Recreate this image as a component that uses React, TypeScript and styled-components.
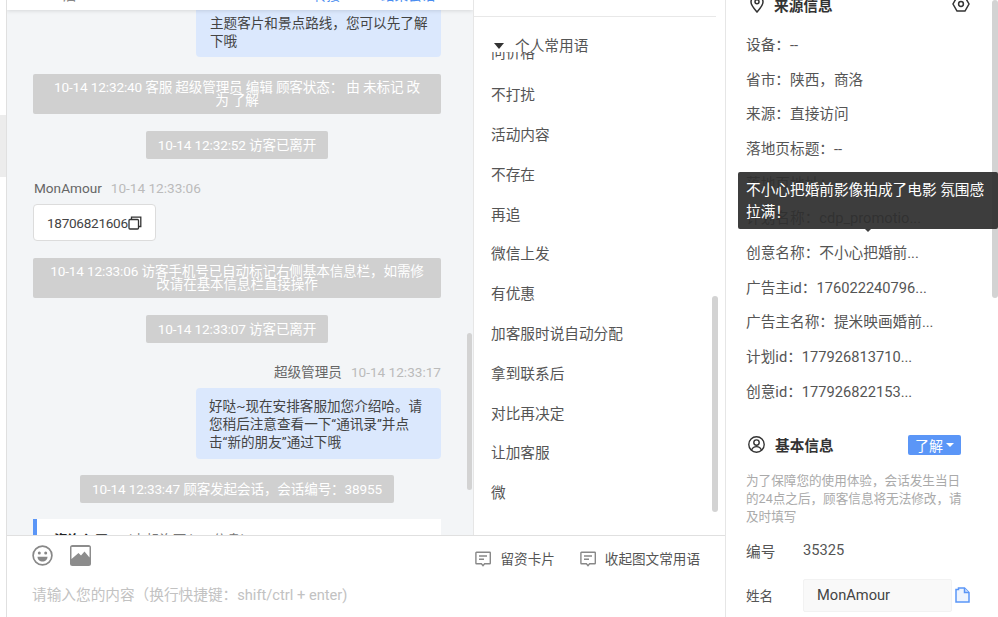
import React from 'react';
import styled, { createGlobalStyle } from 'styled-components';

const GlobalStyle = createGlobalStyle`
  html, body { margin: 0; padding: 0; height: 100%; overflow: hidden; background: #fff; }
  body { font-family: Roboto, "Noto Sans CJK SC", sans-serif; color: #333; font-variant-ligatures: none; }
  #root { height: 100%; }
`;

const Page = styled.div`
  position: relative;
  display: flex;
  width: 998px;
  height: 617px;
  overflow: hidden;
`;

const Gutter = styled.div`
  width: 6px;
  flex: none;
  padding-top: 115px;
  box-sizing: border-box;
`;

const GutterTab = styled.div`
  height: 62px;
  background: #ececec;
`;

const Workspace = styled.div`
  width: 720px;
  flex: none;
  display: flex;
  flex-direction: column;
  border-left: 1px solid #e0e0e0;
  border-right: 1px solid #e6e6e6;
  box-sizing: border-box;
`;

const Upper = styled.div`
  flex: 1;
  min-height: 0;
  display: flex;
`;

const ChatColumn = styled.div`
  position: relative;
  width: 466px;
  flex: none;
  display: flex;
  flex-direction: column;
  background: #f3f5f7;
  border-right: 1px solid #e6e6e6;
  overflow: hidden;
`;

const TopStrip = styled.div`
  height: 10px;
  flex: none;
  display: flex;
  align-items: flex-end;
  background: #fff;
  box-shadow: 0 1px 4px rgba(0, 0, 0, 0.12);
  font-size: 13.6px;
  line-height: 18px;
  overflow: hidden;
  position: relative;
  z-index: 1;
  padding-left: 56px;
`;

const StripCell = styled.span<{ $width: number; $blue?: boolean }>`
  width: ${p => p.$width}px;
  flex: none;
  white-space: nowrap;
  margin-bottom: 6px;
  color: ${p => (p.$blue ? '#4a8df0' : '#888')};
`;

const Messages = styled.div`
  flex: 1;
  display: flex;
  flex-direction: column;
  align-items: flex-start;
  padding: 0 32px 0 26px;
  overflow: hidden;
`;

const Bubble = styled.div<{ $top: number; $cut?: boolean }>`
  align-self: flex-end;
  width: 245px;
  flex: none;
  box-sizing: border-box;
  margin-top: ${p => p.$top}px;
  padding: ${p => (p.$cut ? '4px 10px 7px 14px' : '9px 10px 8px 13px')};
  background: #dbe8fd;
  border-radius: ${p => (p.$cut ? '0 0 4px 4px' : '4px')};
  font-size: 13.6px;
  line-height: 18px;
  color: #444;
  white-space: nowrap;
`;

const SystemNote = styled.div<{ $top: number; $wide?: boolean }>`
  align-self: center;
  flex: none;
  box-sizing: border-box;
  width: ${p => (p.$wide ? '408px' : 'auto')};
  margin-top: ${p => p.$top}px;
  padding: ${p => (p.$wide ? '7px 15px' : '7px 12px')};
  min-height: 28px;
  background: #d0d0d0;
  border-radius: 2px;
  color: #fff;
  font-size: 13.6px;
  letter-spacing: -0.15px;
  line-height: ${p => (p.$wide ? '13px' : '14px')};
  text-align: center;
`;

const Meta = styled.div<{ $top: number; $right?: boolean }>`
  align-self: ${p => (p.$right ? 'flex-end' : 'flex-start')};
  flex: none;
  display: flex;
  gap: 9px;
  margin-top: ${p => p.$top}px;
  margin-left: ${p => (p.$right ? 0 : 1)}px;
  font-size: 13.6px;
  line-height: 18px;
  color: #666;
`;

const MetaTime = styled.span`
  color: #bbb;
`;

const PhoneCard = styled.div`
  flex: none;
  display: flex;
  align-items: center;
  height: 37px;
  width: 123px;
  margin-top: 7px;
  box-sizing: border-box;
  padding-left: 13px;
  background: #fff;
  border: 1px solid #dcdcdc;
  border-radius: 4px;
  font-size: 13.6px;
  letter-spacing: -0.3px;
  color: #444;

  svg { flex: none; }
`;

const InfoCard = styled.div`
  flex: none;
  align-self: stretch;
  height: 40px;
  margin-top: 16px;
  box-sizing: border-box;
  padding: 12px 0 0 17px;
  background: #fff;
  border-left: 4px solid #5b96f7;
  font-size: 13.6px;
  line-height: 18px;
`;

const InfoTitle = styled.b`
  color: #222;
  margin-right: 10px;
`;

const InfoHint = styled.span`
  color: #777;
`;

const Thumb = styled.div<{ $right: number; $top: number; $height: number; $width?: number }>`
  position: absolute;
  right: ${p => p.$right}px;
  top: ${p => p.$top}px;
  width: ${p => p.$width ?? 5}px;
  height: ${p => p.$height}px;
  background: #d3d3d3;
  border-radius: 3px;
`;

const PhrasePanel = styled.div`
  position: relative;
  flex: 1;
  min-width: 0;
  display: flex;
  flex-direction: column;
  background: #fff;
`;

const PanelRule = styled.div`
  height: 17px;
  box-sizing: border-box;
  flex: none;
  margin-right: 9px;
  border-bottom: 1px solid #e8e8e8;
`;

const GroupHead = styled.div`
  flex: none;
  height: 35px;
  box-sizing: border-box;
  display: flex;
  align-items: center;
  gap: 11px;
  padding: 19px 0 0 20px;
  font-size: 14.67px;
  color: #555;
  position: relative;
  z-index: 1;
  background: #fff;
`;

const Caret = styled.i`
  width: 0;
  height: 0;
  margin-top: 4px;
  border-left: 5.5px solid transparent;
  border-right: 5.5px solid transparent;
  border-top: 6px solid #333;
`;

const PhraseList = styled.div`
  flex: 1;
  min-height: 0;
  margin-top: -20px;
  padding-left: 17px;
  overflow: hidden;
`;

const Phrase = styled.div`
  height: 39.8px;
  display: flex;
  align-items: center;
  font-size: 14.67px;
  color: #555;

  &:first-child { margin-bottom: 2px; }
`;

const Composer = styled.div`
  height: 82px;
  flex: none;
  box-sizing: border-box;
  border-top: 1px solid #e0e0e0;
  background: #fff;
  display: flex;
  flex-direction: column;
  padding: 9px 25px 0 25px;
`;

const ComposerBar = styled.div`
  display: flex;
  align-items: flex-start;
`;

const ComposerIcons = styled.div`
  display: flex;
  gap: 17px;
  flex: 1;
`;

const ToolButton = styled.div`
  display: flex;
  align-items: center;
  gap: 9px;
  margin-top: 5px;
  margin-left: 25px;
  font-size: 13.6px;
  line-height: 18px;
  color: #555;
`;

const Placeholder = styled.div`
  margin-top: 17px;
  font-size: 14.67px;
  line-height: 20px;
  color: #c2c2c2;
`;

const Sidebar = styled.div`
  flex: 1;
  min-width: 0;
  padding: 0 0 0 20px;
  box-sizing: border-box;
  display: flex;
  flex-direction: column;
  overflow: hidden;
`;

const SectionHead = styled.div<{ $top: number; $indent: number }>`
  flex: none;
  display: flex;
  align-items: center;
  height: 20px;
  margin-top: ${p => p.$top}px;
  padding-left: ${p => p.$indent}px;
  font-size: 14.67px;
  font-weight: 700;
  color: #333;
`;

const SectionTitle = styled.span<{ $width: number }>`
  margin-left: 10px;
  width: ${p => p.$width}px;
  flex: none;
`;

const SourceRows = styled.div`
  flex: none;
  margin-top: 12px;
`;

const SourceRow = styled.div`
  height: 34.7px;
  display: flex;
  align-items: center;
  font-size: 14.67px;
  color: #555;
  white-space: nowrap;
`;

const StatusButton = styled.div`
  display: flex;
  align-items: center;
  justify-content: center;
  gap: 3px;
  width: 53px;
  height: 20px;
  background: #5b96f7;
  border-radius: 2px;
  color: #fff;
  font-weight: 400;
  font-size: 14px;
`;

const SmallCaret = styled.i`
  width: 0;
  height: 0;
  border-left: 4px solid transparent;
  border-right: 4px solid transparent;
  border-top: 4px solid #fff;
`;

const Note = styled.div`
  flex: none;
  width: 222px;
  margin-top: 17px;
  font-size: 12.6px;
  line-height: 18px;
  color: #aaa;
`;

const FieldRow = styled.div<{ $top: number; $size: number }>`
  flex: none;
  display: flex;
  align-items: center;
  margin-top: ${p => p.$top}px;
  font-size: ${p => p.$size}px;
  color: #555;
`;

const FieldLabel = styled.span`
  width: 57px;
  flex: none;
`;

const FieldInput = styled.div`
  width: 149px;
  height: 33px;
  flex: none;
  box-sizing: border-box;
  padding-left: 13px;
  display: flex;
  align-items: center;
  background: #f9f9f9;
  border: 1px solid #f2f2f2;
  border-radius: 2px;
  font-size: 14.67px;
  color: #444;
  margin-right: 3px;
`;

const Tooltip = styled.div`
  position: absolute;
  left: 738px;
  top: 172px;
  width: 260px;
  height: 57px;
  box-sizing: border-box;
  padding: 7px 8px;
  background: rgba(46, 46, 46, 0.93);
  border-radius: 2px;
  color: #fff;
  font-size: 14.67px;
  line-height: 22px;

  &::after {
    content: '';
    position: absolute;
    left: 127px;
    bottom: -3px;
    border-left: 3px solid transparent;
    border-right: 3px solid transparent;
    border-top: 3px solid rgba(46, 46, 46, 0.93);
  }
`;

const CopyIcon = () => (
  <svg width="14" height="14" viewBox="0 0 14 14" fill="none" stroke="#333" strokeWidth="1.3">
    <rect x="1" y="3.5" width="9.5" height="9.5" rx="1" />
    <path d="M3.5 3.5V1.2h9.3v9.3h-2.3" />
  </svg>
);

const EmojiIcon = () => (
  <svg width="21" height="21" viewBox="0 0 21 21" fill="none">
    <circle cx="10.5" cy="10.5" r="9.4" stroke="#888" strokeWidth="1.7" />
    <circle cx="7.3" cy="8" r="1.5" fill="#888" />
    <circle cx="13.7" cy="8" r="1.5" fill="#888" />
    <path d="M5.5 11.8h10c0 3-2.2 4.8-5 4.8s-5-1.8-5-4.8z" fill="#888" />
  </svg>
);

const ImageIcon = () => (
  <svg width="21" height="21" viewBox="0 0 21 21">
    <rect x="0" y="0" width="21" height="21" rx="2.5" fill="#8c8c8c" />
    <path d="M1.5 2h18v10.5L14.5 6.5l-3.5 4-2.5-2.5-7 6z" fill="#fff" />
  </svg>
);

const MessageIcon = () => (
  <svg width="16" height="16" viewBox="0 0 16 16" fill="none" stroke="#888" strokeWidth="1.4">
    <path d="M1.5 1.2h13.2a.6.6 0 0 1 .6.6v10.4a.6.6 0 0 1-.6.6H9.6L8 14.6l-1.6-1.8H1.5a.6.6 0 0 1-.6-.6V1.8a.6.6 0 0 1 .6-.6z" />
    <path d="M4 5h8M4 8.2h5" />
  </svg>
);

const PinIcon = () => (
  <svg width="14" height="18" viewBox="0 0 14 18" fill="none" stroke="#333" strokeWidth="1.5">
    <path d="M7 17C3.5 13 1 10.3 1 7a6 6 0 0 1 12 0c0 3.3-2.5 6-6 10z" />
    <circle cx="7" cy="6.8" r="2" />
  </svg>
);

const GearIcon = () => (
  <svg width="18" height="18" viewBox="0 0 18 18" fill="none" stroke="#333" strokeWidth="1.5">
    <path d="M5 2h8l4 7-4 7H5L1 9z" />
    <circle cx="9" cy="9" r="2.4" />
  </svg>
);

const UserIcon = () => (
  <svg width="17" height="17" viewBox="0 0 17 17" fill="none" stroke="#333" strokeWidth="1.4">
    <circle cx="8.5" cy="8.5" r="7.7" />
    <circle cx="8.5" cy="6.6" r="2.7" />
    <path d="M3.6 14c.8-2.3 2.6-3.4 4.9-3.4s4.1 1.1 4.9 3.4" />
  </svg>
);

const FileIcon = () => (
  <svg width="15" height="16" viewBox="0 0 15 16" stroke="#5b96f7" strokeWidth="1.5">
    <path d="M1 2.5h2.5V1h6L14 5.5V15H1z" fill="#eef4fe" />
    <path d="M9.5 1v4.5H14" fill="#cfe0fc" />
  </svg>
);

const phrases = ['问价格', '不打扰', '活动内容', '不存在', '再追', '微信上发', '有优惠', '加客服时说自动分配', '拿到联系后', '对比再决定', '让加客服', '微'];

const sourceRows = [
  '设备：--',
  '省市：陕西，商洛',
  '来源：直接访问',
  '落地页标题：--',
  '落地页地址：',
  '计划名称：cdp_promotio...',
  '创意名称：不小心把婚前...',
  '广告主id：176022240796...',
  '广告主名称：提米映画婚前...',
  '计划id：177926813710...',
  '创意id：177926822153...',
];

const App = () => (
  <>
    <GlobalStyle />
    <Page>
      <Gutter>
        <GutterTab />
      </Gutter>
      <Workspace>
        <Upper>
          <ChatColumn>
            <TopStrip>
              <StripCell $width={147}>后</StripCell>
              <StripCell $width={103}>00:02:15</StripCell>
              <StripCell $width={68} $blue>转接</StripCell>
              <StripCell $width={70} $blue>结束会话</StripCell>
            </TopStrip>
            <Messages>
              <Bubble $top={0} $cut>
                主题客片和景点路线，您可以先了解<br />下哦
              </Bubble>
              <SystemNote $top={17} $wide>
                10-14 12:32:40 客服 超级管理员 编辑 顾客状态： 由 未标记 改为 了解
              </SystemNote>
              <SystemNote $top={17}>10-14 12:32:52 访客已离开</SystemNote>
              <Meta $top={20}>
                <span>MonAmour</span>
                <MetaTime>10-14 12:33:06</MetaTime>
              </Meta>
              <PhoneCard>
                18706821606
                <CopyIcon />
              </PhoneCard>
              <SystemNote $top={17} $wide>
                10-14 12:33:06 访客手机号已自动标记右侧基本信息栏，如需修改请在基本信息栏直接操作
              </SystemNote>
              <SystemNote $top={17}>10-14 12:33:07 访客已离开</SystemNote>
              <Meta $top={20} $right>
                <span>超级管理员</span>
                <MetaTime>10-14 12:33:17</MetaTime>
              </Meta>
              <Bubble $top={7}>
                好哒~现在安排客服加您介绍哈。请<br />
                您稍后注意查看一下“通讯录”并点<br />
                击“新的朋友”通过下哦
              </Bubble>
              <SystemNote $top={16}>10-14 12:33:47 顾客发起会话，会话编号：38955</SystemNote>
              <InfoCard>
                <InfoTitle>资询入口</InfoTitle>
                <InfoHint>（点起询页入口信息）</InfoHint>
              </InfoCard>
            </Messages>
            <Thumb $right={1} $top={333} $height={157} />
          </ChatColumn>
          <PhrasePanel>
            <PanelRule />
            <GroupHead>
              <Caret />
              个人常用语
            </GroupHead>
            <PhraseList>
              {phrases.map(p => (
                <Phrase key={p}>{p}</Phrase>
              ))}
            </PhraseList>
            <Thumb $right={7} $top={296} $height={216} $width={6} />
          </PhrasePanel>
        </Upper>
        <Composer>
          <ComposerBar>
            <ComposerIcons>
              <EmojiIcon />
              <ImageIcon />
            </ComposerIcons>
            <ToolButton>
              <MessageIcon />
              留资卡片
            </ToolButton>
            <ToolButton>
              <MessageIcon />
              收起图文常用语
            </ToolButton>
          </ComposerBar>
          <Placeholder>请输入您的内容（换行快捷键：shift/ctrl + enter)</Placeholder>
        </Composer>
      </Workspace>
      <Sidebar>
        <SectionHead $top={-6} $indent={4}>
          <PinIcon />
          <SectionTitle $width={178}>来源信息</SectionTitle>
          <GearIcon />
        </SectionHead>
        <SourceRows>
          {sourceRows.map(r => (
            <SourceRow key={r}>{r}</SourceRow>
          ))}
        </SourceRows>
        <SectionHead $top={27} $indent={2}>
          <UserIcon />
          <SectionTitle $width={133}>基本信息</SectionTitle>
          <StatusButton>
            了解
            <SmallCaret />
          </StatusButton>
        </SectionHead>
        <Note>为了保障您的使用体验，会话发生当日的24点之后，顾客信息将无法修改，请及时填写</Note>
        <FieldRow $top={14} $size={14.67}>
          <FieldLabel>编号</FieldLabel>
          35325
        </FieldRow>
        <FieldRow $top={18} $size={13.6}>
          <FieldLabel>姓名</FieldLabel>
          <FieldInput>MonAmour</FieldInput>
          <FileIcon />
        </FieldRow>
      </Sidebar>
      <Thumb $right={0} $top={0} $height={298} $width={6} />
      <Tooltip>不小心把婚前影像拍成了电影 氛围感拉满！</Tooltip>
    </Page>
  </>
);

export default App;
